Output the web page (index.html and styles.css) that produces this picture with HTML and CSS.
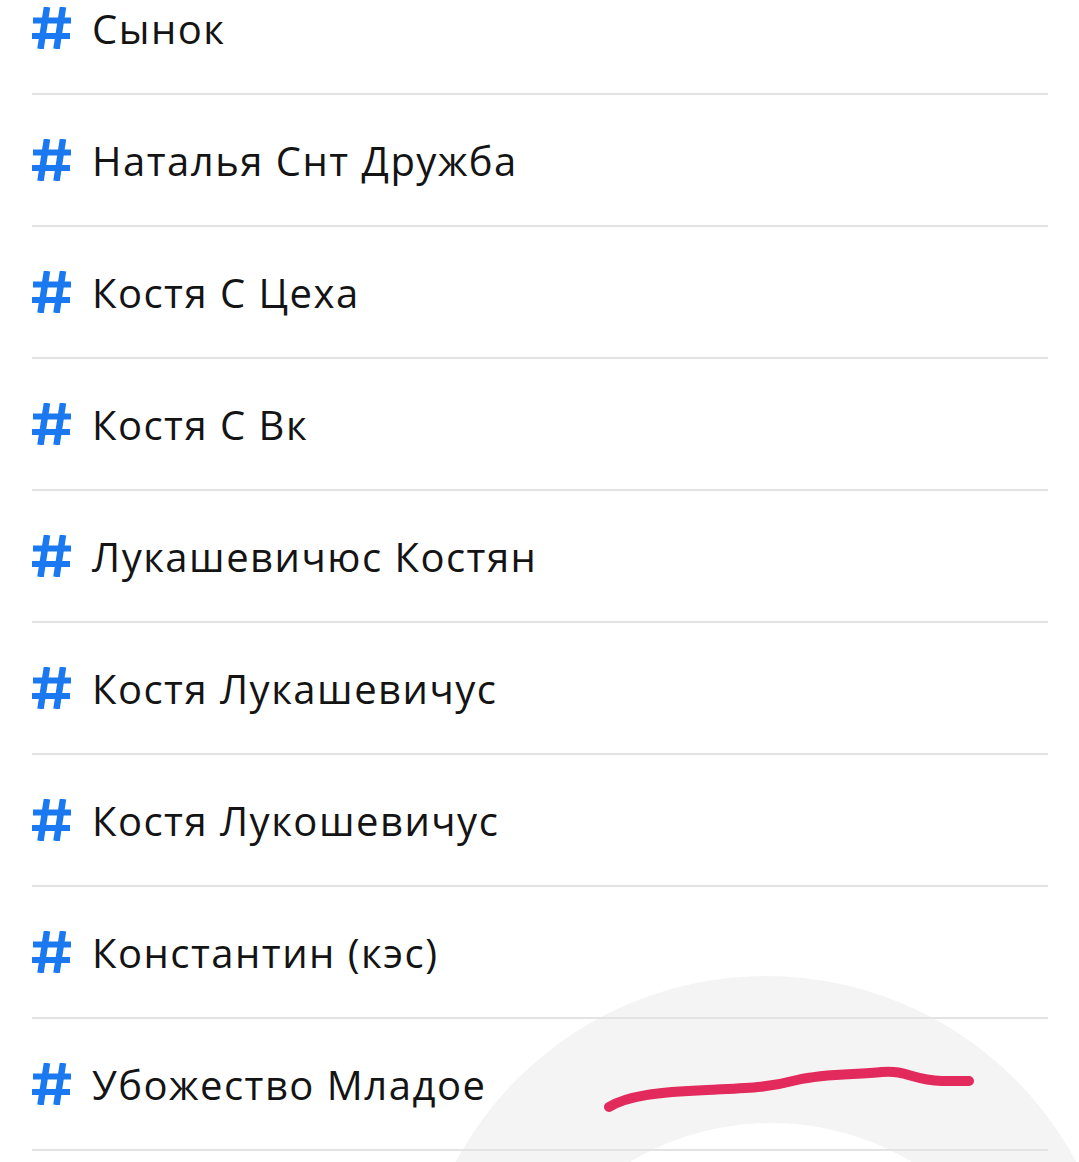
FILE: index.html
```html
<!DOCTYPE html>
<html lang="ru">
<head>
    <meta charset="UTF-8">
    <meta name="viewport" content="width=device-width, initial-scale=1.0">
    <title>Теги</title>
    <link rel="stylesheet" href="styles.css">
</head>
<body>
    <div class="screen">
        <!-- faint ring watermark behind the list -->
        <div class="ring"><div class="ring-hole"></div></div>

        <ul class="tag-list">
            <li class="tag-row"><span class="hash"></span><span class="tag-name">Сынок</span></li>
            <li class="tag-row"><span class="hash"></span><span class="tag-name">Наталья Снт Дружба</span></li>
            <li class="tag-row"><span class="hash"></span><span class="tag-name">Костя С Цеха</span></li>
            <li class="tag-row"><span class="hash"></span><span class="tag-name">Костя С Вк</span></li>
            <li class="tag-row"><span class="hash"></span><span class="tag-name">Лукашевичюс Костян</span></li>
            <li class="tag-row"><span class="hash"></span><span class="tag-name">Костя Лукашевичус</span></li>
            <li class="tag-row"><span class="hash"></span><span class="tag-name">Костя Лукошевичус</span></li>
            <li class="tag-row"><span class="hash"></span><span class="tag-name">Константин (кэс)</span></li>
            <li class="tag-row"><span class="hash"></span><span class="tag-name">Убожество Младое</span></li>
        </ul>

        <!-- hand drawn marker stroke -->
        <svg class="scribble" width="380" height="50" viewBox="0 0 380 50">
            <path d="M12 41 C 30 30, 60 26, 110 24 C 150 22, 170 22, 200 14 C 230 7, 260 9, 285 6 C 310 4, 315 14, 345 15 L 372 15"
                  fill="none" stroke="#e22a5c" stroke-width="10" stroke-linecap="round" stroke-linejoin="round"/>
        </svg>
    </div>

    <script>
        // Same hash icon for every row
        const hashSvg = '<svg width="40" height="42" viewBox="0 0 40 42">' +
            '<path d="M15 0 L8.5 42 M31 0 L24.5 42" stroke="#1a78f0" stroke-width="6.5"/>' +
            '<path d="M1 13.5 H39 M0 29 H38" stroke="#1a78f0" stroke-width="6"/>' +
            '</svg>';
        document.querySelectorAll('.hash').forEach(function(el) {
            el.innerHTML = hashSvg;
        });
    </script>
</body>
</html>
```

FILE: styles.css
```css
body {
    margin: 0;
    background-color: #ffffff;
    font-family: "Open Sans", "Noto Sans", sans-serif;
    color: #141414;
}

/* Screen frame, clips the watermark */
.screen {
    position: relative;
    height: 1162px;
    overflow: hidden;
}

/* Big pale ring in the lower right corner */
.ring {
    position: absolute;
    left: 414px;
    top: 976px;
    width: 704px;
    height: 704px;
    border-radius: 50%;
    background-color: #f4f4f5;
    z-index: 0;
}

.ring-hole {
    position: absolute;
    left: 83px;
    top: 147px;
    width: 548px;
    height: 548px;
    border-radius: 50%;
    background-color: #ffffff;
}

.tag-list {
    list-style: none;
    margin: -37px 0 0 0;
    padding: 0 31px 0 32px;
    position: relative;
    z-index: 1;
}

.tag-row {
    display: flex;
    align-items: center;
    height: 130px;
    border-bottom: 2px solid #e3e3e3;
}

.hash {
    display: flex;
    width: 40px;
    height: 42px;
    margin-right: 20px;
}

.tag-name {
    font-size: 40px;
    letter-spacing: 1.5px;
}

.scribble {
    position: absolute;
    left: 597px;
    top: 1066px;
    z-index: 2;
}
```
